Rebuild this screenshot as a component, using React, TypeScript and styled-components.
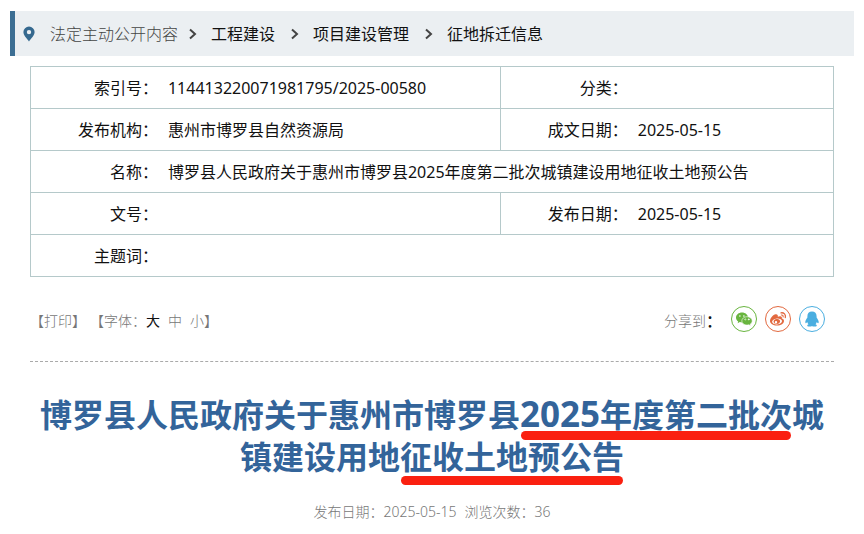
import React from "react";
import styled, { createGlobalStyle } from "styled-components";

const GlobalStyle = createGlobalStyle`
  * { box-sizing: border-box; }
  body {
    margin: 0;
    background: #fff;
    color: #111;
    font: 16px/24px "Noto Sans", "Noto Sans CJK SC", sans-serif;
    text-spacing-trim: space-all;
  }
  a { color: inherit; text-decoration: none; }
`;

const Page = styled.div`
  padding: 11px 10px;
`;

const Breadcrumb = styled.nav`
  display: flex;
  align-items: center;
  min-height: 45px;
  padding: 0 8px;
  border-left: 5px solid #3c6e93;
  background: #ebeff2;
`;

const Pin = styled.svg`
  width: 12px;
  height: 16px;
  margin-right: 15px;
  flex: none;
  fill: #35698f;
`;

const Crumbs = styled.ol`
  display: flex;
  flex-wrap: wrap;
  margin: 0;
  padding: 0;
  list-style: none;
`;

const Crumb = styled.li<{ $root?: boolean }>`
  display: flex;
  align-items: center;
  gap: ${(p) => (p.$root ? 11 : 16)}px;
  color: ${(p) => (p.$root ? "#444" : "#111")};
  font-weight: ${(p) => (p.$root ? 300 : 400)};
`;

const Chevron = styled.svg`
  width: 8px;
  height: 12px;
  margin-right: 14px;
  fill: none;
  stroke: #444;
  stroke-width: 2;
`;

const Content = styled.main`
  padding: 10px 20px 0;
`;

const InfoTable = styled.table`
  width: 100%;
  table-layout: fixed;
  border-collapse: collapse;

  tr {
    height: 42px;
    border: 1px solid #b5c9ca;
  }
`;

const Label = styled.th<{ $divided?: boolean }>`
  padding: 0 1px 0 0;
  text-align: right;
  font-weight: 400;
  border-left: ${(p) => (p.$divided ? "1px solid #b5c9ca" : "0")};
`;

const Value = styled.td`
  padding: 0 9px;
`;

const Toolbar = styled.div`
  display: flex;
  justify-content: space-between;
  align-items: center;
  height: 85px;
  border-bottom: 1px dashed #aaa;
  color: #777;
  font-size: 14px;
  font-weight: 300;
`;

const ToolGroup = styled.div<{ $gap?: number }>`
  display: flex;
  align-items: center;
  gap: ${(p) => p.$gap ?? 0}px;
`;

const ToolText = styled(ToolGroup)`
  padding-top: 4px;
`;

const TextButton = styled.button<{ $active?: boolean }>`
  padding: 0;
  border: 0;
  background: none;
  font: inherit;
  font-weight: ${(p) => (p.$active ? 400 : 300)};
  cursor: pointer;
  color: ${(p) => (p.$active ? "#111" : "inherit")};
`;

const Colon = styled.span`
  color: #111;
  font-size: 16px;
  font-weight: 500;
`;

const ShareList = styled.div`
  display: flex;
  gap: 8px;
  margin: 0 9px;
`;

const ShareButton = styled.button<{ $color: string }>`
  display: flex;
  align-items: center;
  justify-content: center;
  width: 26px;
  height: 26px;
  padding: 0;
  border: 1px solid ${(p) => p.$color};
  border-radius: 50%;
  background: #fff;
  color: ${(p) => p.$color};
  cursor: pointer;
`;

const ShareIcon = styled.svg`
  width: 18px;
  height: 18px;
  fill: currentColor;
`;

const Title = styled.h1`
  margin: 32px 0 0;
  color: #33649a;
  font-size: 32px;
  line-height: 42px;
  font-weight: 700;
  text-align: center;
`;

const Digits = styled.span`
  font-size: 35px;
  line-height: 1;
`;

const Marked = styled.span<{ $drop: number }>`
  position: relative;
  display: inline-block;
  height: 42px;
  vertical-align: top;

  &::after {
    content: "";
    position: absolute;
    left: 1px;
    right: 1px;
    bottom: ${(p) => -p.$drop}px;
    height: 9px;
    border-radius: 5px;
    background: #fa2010;
  }
`;

const Meta = styled.p`
  display: flex;
  justify-content: center;
  gap: 8px;
  margin: 22px 0 0;
  color: #777;
  font-size: 14px;
  font-weight: 300;
`;

const crumbs = ["法定主动公开内容", "工程建设", "项目建设管理", "征地拆迁信息"];

const WeChat = () => (
  <ShareIcon viewBox="0 0 18 18" aria-hidden="true">
    <path
      fillRule="evenodd"
      d="M7 2.500C3.700 2.500 1 4.700 1 7.500c0 1.600.8 3 2.200 3.900l-.6 1.800 2.200-1.100c.7.2 1.400.3 2.200.3 3.300 0 6-2.200 6-4.900S10.300 2.500 7 2.500ZM4.900 5.200a.8.8 0 1 1 0 1.600.8.8 0 0 1 0-1.600Zm4 0a.8.8 0 1 1 0 1.600.8.8 0 0 1 0-1.600Z"
    />
    <path
      fillRule="evenodd"
      stroke="#fff"
      strokeWidth=".6"
      d="M12 6.700c-2.900 0-5.200 1.900-5.200 4.200s2.300 4.200 5.200 4.200c.6 0 1.200-.1 1.800-.3l1.900 1-.5-1.600c1.200-.8 2-2 2-3.300 0-2.300-2.300-4.200-5.200-4.200ZM10.300 8.800a.6.600 0 1 1 0 1.200.6.600 0 0 1 0-1.200Zm3.500 0a.6.600 0 1 1 0 1.200.6.600 0 0 1 0-1.200Z"
    />
  </ShareIcon>
);

const Weibo = () => (
  <ShareIcon viewBox="0 0 18 18" aria-hidden="true">
    <path
      fillRule="evenodd"
      d="M6.600 4.200C4.200 4.700 1 8 1 11c0 2.700 3.200 4.500 6.800 4.500 4.300 0 7.200-2.300 7.200-4.600 0-1.400-1-2.100-2.200-2.400.5-1.400-.2-2.500-2-2.300-.8.100-1.500.4-2 .6.400-1.700-.5-2.900-2.200-2.600ZM7.900 8.400c2.800-.2 5 .9 5.100 2.700.1 1.700-2 3.200-4.800 3.400-2.800.2-5-1-5.100-2.700-.1-1.700 2-3.200 4.800-3.400Z"
    />
    <path
      fillRule="evenodd"
      d="M7.600 9c-1.900.2-3.200 1.400-3 2.800.2 1.500 1.700 2.400 3.400 2.200 1.900-.2 3.300-1.500 3.100-3C10.900 9.600 9.400 8.800 7.600 9ZM7 11.100a1.200 1.200 0 1 1 0 2.400 1.200 1.200 0 0 1 0-2.400Z"
    />
    <g fill="none" stroke="currentColor" strokeLinecap="round">
      <path strokeWidth="1.300" d="M12 2.800c2.900-.5 5.100 1.900 4.300 4.800" />
      <path strokeWidth="1.100" d="M12.300 5c1.200-.2 2.100.8 1.800 2" />
    </g>
  </ShareIcon>
);

const QQ = () => (
  <ShareIcon viewBox="0 0 18 18" aria-hidden="true">
    <path d="M9 1.500c-3 0-4.600 2-4.600 4.700v1.200C3.200 9 2.300 10.600 2.300 12c0 .9.300 1.300.7 1.200.4-.1.800-.5 1.200-1.100.2.800.7 1.500 1.300 2.100-.8.300-1.300.7-1.300 1.200 0 .8 1.100 1.200 2.500 1.200 1 0 1.900-.3 2.300-.7.400.4 1.300.7 2.300.7 1.400 0 2.500-.4 2.500-1.200 0-.5-.5-.9-1.300-1.200.6-.6 1.100-1.300 1.300-2.100.4.600.8 1 1.200 1.100.4.100.7-.3.700-1.200 0-1.400-.9-3-2.100-4.600V6.200c0-2.700-1.600-4.700-4.600-4.700Z" />
  </ShareIcon>
);

const shares = [
  { name: "微信", color: "#69b53f", Icon: WeChat },
  { name: "微博", color: "#e2693f", Icon: Weibo },
  { name: "QQ", color: "#4aaee0", Icon: QQ },
];

export default function App() {
  return (
    <Page>
      <GlobalStyle />
      <Breadcrumb aria-label="当前位置">
        <Pin viewBox="0 0 12 16" aria-hidden="true">
          <path
            fillRule="evenodd"
            d="M6 .5A5.600 5.600 0 0 0 .4 6.100C.4 9.800 4 12.500 6 15.500c2-3 5.600-5.700 5.600-9.400A5.600 5.600 0 0 0 6 .5Zm0 3.400a2.200 2.200 0 1 1 0 4.400 2.200 2.200 0 0 1 0-4.400Z"
          />
        </Pin>
        <Crumbs>
          {crumbs.map((text, i) => (
            <Crumb key={text} $root={i === 0}>
              <a href="#">{text}</a>
              {i < crumbs.length - 1 && (
                <Chevron viewBox="0 0 8 12" aria-hidden="true">
                  <path d="M1 1.500 6 6 1 10.500" />
                </Chevron>
              )}
            </Crumb>
          ))}
        </Crumbs>
      </Breadcrumb>

      <Content>
        <InfoTable>
          <colgroup>
            <col width="16%" />
            <col />
            <col width="16%" />
            <col width="25.500%" />
          </colgroup>
          <tbody>
            <tr>
              <Label scope="row">索引号：</Label>
              <Value>114413220071981795/2025-00580</Value>
              <Label scope="row" $divided>分类：</Label>
              <Value />
            </tr>
            <tr>
              <Label scope="row">发布机构：</Label>
              <Value>惠州市博罗县自然资源局</Value>
              <Label scope="row" $divided>成文日期：</Label>
              <Value>2025-05-15</Value>
            </tr>
            <tr>
              <Label scope="row">名称：</Label>
              <Value colSpan={3}>
                博罗县人民政府关于惠州市博罗县2025年度第二批次城镇建设用地征收土地预公告
              </Value>
            </tr>
            <tr>
              <Label scope="row">文号：</Label>
              <Value />
              <Label scope="row" $divided>发布日期：</Label>
              <Value>2025-05-15</Value>
            </tr>
            <tr>
              <Label scope="row">主题词：</Label>
              <Value colSpan={3} />
            </tr>
          </tbody>
        </InfoTable>

        <Toolbar>
          <ToolText $gap={4}>
            <TextButton type="button">【打印】</TextButton>
            <ToolGroup $gap={8}>
              <ToolGroup>
                【字体：
                <TextButton type="button" $active>大</TextButton>
              </ToolGroup>
              <TextButton type="button">中</TextButton>
              <ToolGroup>
                <TextButton type="button">小</TextButton>】
              </ToolGroup>
            </ToolGroup>
          </ToolText>
          <ToolGroup>
            <ToolText>
              分享到<Colon>：</Colon>
            </ToolText>
            <ShareList>
              {shares.map(({ name, color, Icon }) => (
                <ShareButton key={name} type="button" $color={color} aria-label={name}>
                  <Icon />
                </ShareButton>
              ))}
            </ShareList>
          </ToolGroup>
        </Toolbar>

        <Title>
          博罗县人民政府关于惠州市博罗县
          <Marked $drop={4}>
            <Digits>2025</Digits>年度第二批次
          </Marked>
          城镇建设用地
          <Marked $drop={7}>征收土地预公告</Marked>
        </Title>
        <Meta>
          <span>发布日期：2025-05-15</span>
          <span>浏览次数：36</span>
        </Meta>
      </Content>
    </Page>
  );
}
